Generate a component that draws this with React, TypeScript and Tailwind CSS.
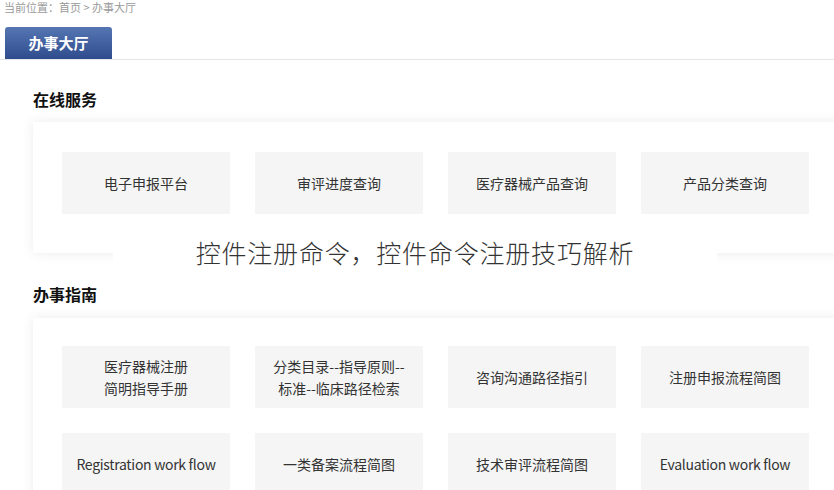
import React from "react";

const cjk = { fontFamily: '"Microsoft YaHei", "Noto Sans CJK SC", "Noto Sans", sans-serif' };

function Tile({ children, en }: { children: React.ReactNode; en?: boolean }) {
  return (
    <div
      className={
        en
          ? "w-[168px] h-[62px] bg-[#f5f5f5] flex items-center justify-center text-center text-[14px] leading-[22px] text-[#333] tracking-[-0.3px]"
          : "w-[168px] h-[62px] bg-[#f5f5f5] flex items-center justify-center text-center text-[14px] leading-[22px] text-[#333]"
      }
    >
      {children}
    </div>
  );
}

export default function App() {
  return (
    <div className="relative w-[834px] h-[490px] overflow-hidden bg-white" style={cjk}>
      <div className="h-[14px] pl-[4px] text-[11px] leading-[14px] text-[#9a9a9a]">当前位置：首页 &gt; 办事大厅</div>
      <div className="mt-[13px] h-[33px] border-b border-[#e6e6e6] flex items-end">
        <div className="ml-[5px] w-[107px] h-[32px] rounded-t-[3px] bg-gradient-to-b from-[#5675b3] to-[#2f4d8d] flex items-center justify-center text-white font-bold text-[15px]">
          办事大厅
        </div>
      </div>

      <div className="pl-[33px]">
        <div className="mt-[29px] h-[20px] leading-[20px] text-[16px] font-bold text-[#111]">在线服务</div>
        <div className="mt-[13px] w-[830px] h-[131px] bg-white shadow-[0_0_12px_rgba(0,0,0,0.08)] pt-[30px] pl-[29px]">
          <div className="flex gap-[25px]">
            <Tile>电子申报平台</Tile>
            <Tile>审评进度查询</Tile>
            <Tile>医疗器械产品查询</Tile>
            <Tile>产品分类查询</Tile>
          </div>
        </div>

        <div className="mt-[31px] h-[20px] leading-[20px] text-[16px] font-bold text-[#111]">办事指南</div>
        <div className="mt-[14px] w-[830px] h-[200px] bg-white shadow-[0_0_12px_rgba(0,0,0,0.08)] pt-[28px] pl-[29px]">
          <div className="grid grid-cols-[repeat(4,168px)] gap-x-[25px] gap-y-[25px]">
            <Tile>
              <span>医疗器械注册<br />简明指导手册</span>
            </Tile>
            <Tile>
              <span>分类目录--指导原则--<br />标准--临床路径检索</span>
            </Tile>
            <Tile>咨询沟通路径指引</Tile>
            <Tile>注册申报流程简图</Tile>
            <Tile en>Registration work flow</Tile>
            <Tile>一类备案流程简图</Tile>
            <Tile>技术审评流程简图</Tile>
            <Tile en>Evaluation work flow</Tile>
          </div>
        </div>
      </div>

      <div className="absolute left-[113px] top-[237px] w-[604px] h-[32px] bg-white flex items-center justify-center text-[25px] font-light text-[#333] tracking-[0.8px]">
        控件注册命令，控件命令注册技巧解析
      </div>
    </div>
  );
}
